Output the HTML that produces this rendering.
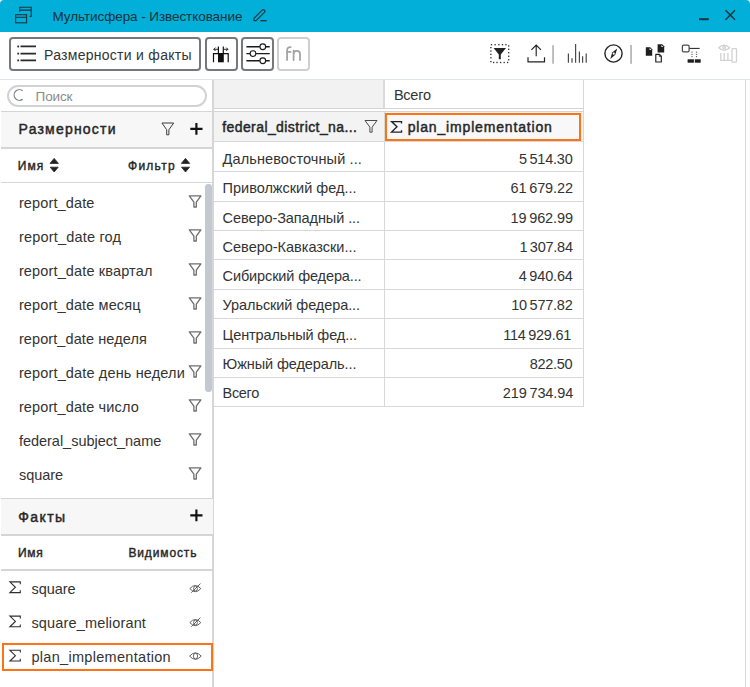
<!DOCTYPE html>
<html><head><meta charset="utf-8">
<style>
*{margin:0;padding:0;box-sizing:border-box}
html,body{width:750px;height:687px;overflow:hidden;background:#fff;font-family:"Liberation Sans",sans-serif;color:#333}
.a{position:absolute}
.t{position:absolute;white-space:nowrap;line-height:1}
#title{left:0;top:0;width:750px;height:31.6px;background:#01afd8;border-radius:4px 4px 0 0}
#toolbar{left:0;top:31.6px;width:750px;height:48.4px;background:#fff;border-bottom:1px solid #dfe5ec}
.btn{position:absolute;top:37.2px;height:33.6px;border:2px solid #76797b;border-radius:4px;background:#fff}
.ln{position:absolute;background:#d5d5d5;height:1px}
.hdr{position:absolute;background:#f7f7f7}
.item{font-size:14px;letter-spacing:0.35px;color:#333}
.fl{position:absolute}
.cell{font-size:13.5px;letter-spacing:0.3px;color:#333}
</style></head><body>
<!-- title bar -->
<div id="title" class="a"></div>
<svg class="a" style="left:0;top:0" width="750" height="31">
  <g fill="none" stroke="#17353f" stroke-width="1.6">
    <path d="M19.8 11.8V7.3H31.2V16.4H29.6M19.8 10.1H31.2" stroke-width="1.1"/>
    <rect x="15.6" y="14.7" width="11" height="8.1" stroke-width="1.1"/>
    <path d="M15.6 17.3h11" stroke-width="1.1"/>
    <path d="M253.9 20.6V18.4L262.2 10.1a1.55 1.55 0 0 1 2.2 2.2L256.1 20.6Z" stroke-width="1.15" stroke-linejoin="round"/>
    <path d="M260.3 20.7H266.7" stroke-width="1.3"/>
    <path d="M699 19.2h9.8" stroke-width="2"/>
    <path d="M725.5 10.2l9.5 9.5M735 10.2l-9.5 9.5" stroke-width="1.5"/>
  </g>
</svg>

<!-- toolbar -->
<div id="toolbar" class="a"></div>
<div class="btn" style="left:9px;width:192px"></div>
<div class="btn" style="left:205px;width:32.8px"></div>
<div class="btn" style="left:240.9px;width:32.8px"></div>
<div class="btn" style="left:277.4px;width:32.8px;border-color:#cfcfcf"></div>
<svg class="a" style="left:0;top:31px" width="750" height="48">
  <g stroke="#2a2a2a" stroke-width="1.7">
    <path d="M20.5 15.4H36M20.5 22.6H36M20.5 29.4H36"/>
  </g>
  <g fill="#2a2a2a"><rect x="17.3" y="14.6" width="1.8" height="1.8"/><rect x="17.3" y="21.7" width="1.8" height="1.8"/><rect x="17.3" y="28.5" width="1.8" height="1.8"/></g>
</svg>

<!-- left panel -->
<div class="a" style="left:6.9px;top:84.9px;width:200.6px;height:22.6px;border:2px solid #d2d2d2;border-radius:11.3px"></div>
<div class="ln" style="left:1px;top:111px;width:212px"></div>
<div class="hdr" style="left:1px;top:112px;width:212px;height:35px"></div>
<div class="ln" style="left:1px;top:147.2px;width:212px;height:1.5px"></div>
<div class="ln" style="left:1px;top:182px;width:212px"></div>
<div class="a" style="left:205.4px;top:184.1px;width:6.5px;height:208.4px;background:#c4c8cf;border-radius:3.25px"></div>
<div class="a" style="left:212.4px;top:80px;width:1.4px;height:607px;background:#d6d6d6"></div>
<div class="a" style="left:745px;top:80px;width:1px;height:607px;background:#d8d8d8"></div>


<div class="ln" style="left:1px;top:497.5px;width:212px"></div>
<div class="hdr" style="left:1px;top:498.5px;width:212px;height:35.5px"></div>
<div class="ln" style="left:1px;top:534px;width:212px;height:1.5px"></div>
<div class="ln" style="left:1px;top:569.3px;width:212px;height:1.4px"></div>

<div class="a" style="left:2px;top:643px;width:211px;height:28px;border:2px solid #ff7314"></div>

<!-- table -->
<div class="a" style="left:214px;top:80px;width:169px;height:28px;background:#f2f2f2"></div>
<div class="a" style="left:214px;top:108px;width:369px;height:1px;background:#d4d4d4"></div>
<div class="a" style="left:214px;top:111px;width:369px;height:1px;background:#d4d4d4"></div>
<div class="a" style="left:214px;top:112px;width:369px;height:29.5px;background:#f3f3f3"></div>
<div class="a" style="left:383px;top:80px;width:2px;height:28px;background:#dadada"></div>
<div class="a" style="left:582.5px;top:80px;width:1px;height:327px;background:#d8d8d8"></div>
<div class="a" style="left:384px;top:111px;width:1px;height:296px;background:#d8d8d8"></div>
<div class="a" style="left:385px;top:112.7px;width:195.6px;height:28px;border:2px solid #ff7314;background:#f8f8f8"></div>


<div class="a" style="left:214px;top:141.4px;width:369px;height:1px;background:#d8d8d8"></div>
<div class="a" style="left:214px;top:171.10px;width:369px;height:1px;background:#d8d8d8"></div>
<div class="a" style="left:214px;top:200.51px;width:369px;height:1px;background:#d8d8d8"></div>
<div class="a" style="left:214px;top:229.92px;width:369px;height:1px;background:#d8d8d8"></div>
<div class="a" style="left:214px;top:259.33px;width:369px;height:1px;background:#d8d8d8"></div>
<div class="a" style="left:214px;top:288.74px;width:369px;height:1px;background:#d8d8d8"></div>
<div class="a" style="left:214px;top:318.15px;width:369px;height:1px;background:#d8d8d8"></div>
<div class="a" style="left:214px;top:347.56px;width:369px;height:1px;background:#d8d8d8"></div>
<div class="a" style="left:214px;top:376.97px;width:369px;height:1px;background:#d8d8d8"></div>
<div class="a" style="left:214px;top:406.38px;width:369px;height:1px;background:#d8d8d8"></div>
<svg class="a" style="left:0;top:0;z-index:5" width="750" height="687">
 <!-- btn2 pivot icon -->
 <g fill="none" stroke="#111" stroke-width="1.2">
  <path d="M213.5 62.3V53.6H228.2V62.3"/>
  <path d="M218.4 53V46.5M223.3 53V46.5"/>
  <path d="M213.8 49.3H218M215.5 47.6l-1.7 1.7 1.7 1.7" stroke-width="0.9"/>
  <path d="M223.7 49.3H227.9M226.2 47.6l1.7 1.7-1.7 1.7" stroke-width="0.9"/>
 </g>
 <rect x="218" y="53.5" width="5.8" height="8.8" fill="#111"/>
 <!-- btn3 sliders -->
 <g fill="none" stroke="#1a1a1a" stroke-width="1.5">
  <path d="M246.4 46.7H259.8M265.8 46.7H269.7" stroke-width="1.35"/>
  <path d="M246.4 53.6H250M256 53.6H269.7" stroke-width="1.35"/>
  <path d="M246.4 60.7H259.8M265.8 60.7H269.7" stroke-width="1.35"/>
  <circle cx="262.8" cy="46.7" r="2.85" stroke-width="1.15"/>
  <circle cx="253" cy="53.6" r="2.85" stroke-width="1.15"/>
  <circle cx="262.8" cy="60.7" r="2.85" stroke-width="1.15"/>
 </g>
 <!-- fn -->
 <g fill="none" stroke="#a2a2a2" stroke-width="1.75" stroke-linecap="round">
  <path d="M287.1 60V50.2a3.2 3.2 0 0 1 3.2-3.2h0.4"/>
  <path d="M287.1 51.9H290.6"/>
  <path d="M293.6 50.7V60M293.6 54a3.2 3.2 0 0 1 6.4 0V60"/>
 </g>
 <!-- dotted filter -->
 <g fill="#2a2a2a"><rect x="490.85" y="44.05" width="1.3" height="1.3"/><rect x="494.45" y="44.05" width="1.3" height="1.3"/><rect x="498.25" y="44.05" width="1.3" height="1.3"/><rect x="501.85" y="44.05" width="1.3" height="1.3"/><rect x="505.25" y="44.05" width="1.3" height="1.3"/><rect x="508.05" y="45.25" width="1.3" height="1.3"/><rect x="508.05" y="48.65" width="1.3" height="1.3"/><rect x="508.05" y="52.05" width="1.3" height="1.3"/><rect x="508.05" y="55.65" width="1.3" height="1.3"/><rect x="508.05" y="59.05" width="1.3" height="1.3"/><rect x="492.95" y="61.85" width="1.3" height="1.3"/><rect x="496.35" y="61.85" width="1.3" height="1.3"/><rect x="499.95" y="61.85" width="1.3" height="1.3"/><rect x="503.55" y="61.85" width="1.3" height="1.3"/><rect x="506.95" y="61.85" width="1.3" height="1.3"/><rect x="490.25" y="46.95" width="1.3" height="1.3"/><rect x="490.25" y="50.35" width="1.3" height="1.3"/><rect x="490.25" y="53.75" width="1.3" height="1.3"/><rect x="490.25" y="57.15" width="1.3" height="1.3"/><rect x="490.25" y="60.95" width="1.3" height="1.3"/></g>
 <path d="M493.6 48H506L500.8 54.4V59.3H498.8V54.4Z" fill="#222"/>
 <!-- upload -->
 <g fill="none" stroke="#222" stroke-width="1.3">
  <path d="M536.2 45.8V56.3M531.4 49.8l4.8-4.8 4.8 4.8" stroke-width="1.15"/>
  <path d="M528 57.2V61.9H544.5V57.2" stroke-width="1.2"/>
 </g>
 <rect x="552.3" y="45.2" width="1.5" height="18.5" fill="#aaa"/>
 <!-- bars -->
 <g stroke="#4a4a4a" stroke-width="1.2">
  <path d="M568.4 62.8V53.6M572 62.8V58.2M575.6 62.8V44M579.4 62.8V51.6M582.6 62.8V56.2M586.2 62.8V53.6"/>
 </g>
 <!-- compass -->
 <circle cx="613.5" cy="53.5" r="8.6" fill="none" stroke="#222" stroke-width="1.4"/>
 <path d="M617.2 48.4L615.3 54.7L610.3 58.9L612.2 52.6Z" fill="#222"/>
 <circle cx="613.75" cy="53.65" r="1.1" fill="#fff"/>
 <rect x="630.3" y="45" width="1.5" height="18.8" fill="#aaa"/>
 <!-- docs -->
 <path d="M645.8 47.2H650.2L652.2 49.2V55.8H645.8Z" fill="#1e1e1e"/>
 <path d="M649.6 47.9V49.9H651.6Z" fill="#fff"/>
 <path d="M657.6 44.2H662.2L664.2 46.2V52.4H657.6Z" fill="#1e1e1e"/>
 <path d="M661.4 44.9V46.9H663.4Z" fill="#fff"/>
 <path d="M655.8 54.4H659.5L661.3 56.2V62H655.8Z" fill="none" stroke="#1e1e1e" stroke-width="1.15" stroke-linejoin="round"/><path d="M659.3 54.6V56.4H661.1" fill="none" stroke="#1e1e1e" stroke-width="0.8"/>
 <!-- hierarchy -->
 <rect x="682.4" y="45" width="6.7" height="6.9" rx="1.3" fill="none" stroke="#4a4a4a" stroke-width="1.25"/>
 <path d="M689.4 48.4H699.6" stroke="#222" stroke-width="1.05"/>
 <g fill="#666"><rect x="691.4" y="51.6" width="1.2" height="1.1"/><rect x="691.4" y="53.9" width="1.2" height="1.1"/><rect x="691.4" y="56" width="1.2" height="1.1"/>
 <rect x="695.9" y="51.6" width="1.2" height="1.1"/><rect x="695.9" y="53.9" width="1.2" height="1.1"/><rect x="695.9" y="56" width="1.2" height="1.1"/></g>
 <rect x="687.6" y="59.3" width="6.3" height="3.4" fill="#1e1e1e"/>
 <rect x="694.8" y="59.3" width="5.9" height="3.4" fill="#1e1e1e"/>
 <!-- disabled eye-cols -->
 <g fill="none" stroke="#d2d2d2" stroke-width="1.3">
  <path d="M718.8 47.8Q724.2 42.6 729.6 47.8Q724.2 53 718.8 47.8Z"/>
  <circle cx="724.2" cy="47.8" r="1.3"/>
  <path d="M720.8 52.9V60.4H731.8M724.2 52.9V60.4M727.9 52.9V60.4"/>
  <rect x="732" y="48.6" width="4.5" height="13.6" rx="0.8"/>
 </g>
 <!-- search C -->
 <path d="M22.6 90.76A5.3 5.3 0 1 0 22.6 99.24" fill="none" stroke="#6f7780" stroke-width="1.1"/>
 <!-- dims header filter + plus -->
 <path d="M161.9 123H173.7L168.9 129.7V134.8H166.7V129.7Z" fill="none" stroke="#3a3a3a" stroke-width="1" stroke-linejoin="round"/>
 <path d="M190.3 128.8H202.5M196.4 122.9V134.7" stroke="#111" stroke-width="2.15"/>
 <path d="M190.3 515.3H202.5M196.4 509.4V521.2" stroke="#111" stroke-width="2.15"/>
 <!-- sort arrows -->
 <g fill="#222" stroke="#222" stroke-width="0.8" stroke-linejoin="round">
  <path d="M54.2 158.4L58.4 163.4H50Z"/><path d="M50.2 167.2H58.2L54.2 172Z"/>
  <path d="M185.5 158.4L189.7 163.4H181.3Z"/><path d="M181.5 167.2H189.5L185.5 172Z"/>
 </g>
 <!-- table header filter -->
 <path d="M365 120.5H377L372.1 127.2V132.2H369.9V127.2Z" fill="none" stroke="#4a4a4a" stroke-width="1" stroke-linejoin="round"/>
 <!-- sigma header -->
 <path d="M401.5 123.4V121.6H391.6L397 126.85L391.6 132.1H401.5V130.3" fill="none" stroke="#222" stroke-width="1.35"/>
 <path d="M189.3 195.8H200.9L196.3 202.2V207.0H193.9V202.2Z" fill="none" stroke="#6e6e6e" stroke-width="1.3" stroke-linejoin="round"/>
 <path d="M189.3 229.8H200.9L196.3 236.2V241.0H193.9V236.2Z" fill="none" stroke="#6e6e6e" stroke-width="1.3" stroke-linejoin="round"/>
 <path d="M189.3 263.8H200.9L196.3 270.2V275.0H193.9V270.2Z" fill="none" stroke="#6e6e6e" stroke-width="1.3" stroke-linejoin="round"/>
 <path d="M189.3 297.8H200.9L196.3 304.2V309.0H193.9V304.2Z" fill="none" stroke="#6e6e6e" stroke-width="1.3" stroke-linejoin="round"/>
 <path d="M189.3 331.8H200.9L196.3 338.2V343.0H193.9V338.2Z" fill="none" stroke="#6e6e6e" stroke-width="1.3" stroke-linejoin="round"/>
 <path d="M189.3 365.8H200.9L196.3 372.2V377.0H193.9V372.2Z" fill="none" stroke="#6e6e6e" stroke-width="1.3" stroke-linejoin="round"/>
 <path d="M189.3 399.8H200.9L196.3 406.2V411.0H193.9V406.2Z" fill="none" stroke="#6e6e6e" stroke-width="1.3" stroke-linejoin="round"/>
 <path d="M189.3 433.8H200.9L196.3 440.2V445.0H193.9V440.2Z" fill="none" stroke="#6e6e6e" stroke-width="1.3" stroke-linejoin="round"/>
 <path d="M189.3 467.8H200.9L196.3 474.2V479.0H193.9V474.2Z" fill="none" stroke="#6e6e6e" stroke-width="1.3" stroke-linejoin="round"/>
 <path d="M20.3 584.2V581.9H9.9L15.4 587.25L9.9 592.6H20.3V590.3" fill="none" stroke="#2e2e2e" stroke-width="1.1"/>
 <path d="M20.3 618.4V616.1H9.9L15.4 621.45L9.9 626.8H20.3V624.5" fill="none" stroke="#2e2e2e" stroke-width="1.1"/>
 <path d="M20.3 652.6V650.3H9.9L15.4 655.65L9.9 661.0H20.3V658.7" fill="none" stroke="#2e2e2e" stroke-width="1.1"/>
 <path d="M189.8 588.6Q195.3 582.4 200.8 588.6Q195.3 594.8 189.8 588.6Z" fill="none" stroke="#5a5a5a" stroke-width="0.95"/><ellipse cx="195.5" cy="588.6" rx="1.9" ry="2.4" fill="none" stroke="#5a5a5a" stroke-width="0.9"/><path d="M191.3 592.7L200.4 583.6" stroke="#5a5a5a" stroke-width="0.95"/>
 <path d="M189.8 622.6Q195.3 616.4 200.8 622.6Q195.3 628.8 189.8 622.6Z" fill="none" stroke="#5a5a5a" stroke-width="0.95"/><ellipse cx="195.5" cy="622.6" rx="1.9" ry="2.4" fill="none" stroke="#5a5a5a" stroke-width="0.9"/><path d="M191.3 626.7L200.4 617.6" stroke="#5a5a5a" stroke-width="0.95"/>
 <path d="M189.6 656.1Q195.4 649.6 201.2 656.1Q195.4 662.6 189.6 656.1Z" fill="none" stroke="#5a5a5a" stroke-width="0.95"/><ellipse cx="195.5" cy="656.1" rx="2.1" ry="2.8" fill="none" stroke="#5a5a5a" stroke-width="0.9"/>
</svg>
<div class="t" style="left:52.50px;top:10px;font-size:13.5px;letter-spacing:-0.072px;color:#15323c;">Мультисфера - Известкование</div>
<div class="t" style="left:44.00px;top:48px;font-size:14px;letter-spacing:0.276px;color:#333;">Размерности и факты</div>
<div class="t" style="left:35.60px;top:90px;font-size:13.5px;letter-spacing:-0.122px;color:#8a8a8a;">Поиск</div>
<div class="t" style="left:18.60px;top:122px;font-size:14px;-webkit-text-stroke:0.45px #262626;letter-spacing:1.203px;color:#262626;">Размерности</div>
<div class="t" style="left:17.80px;top:160px;font-size:12px;-webkit-text-stroke:0.4px #262626;letter-spacing:1.012px;color:#262626;">Имя</div>
<div class="t" style="left:128.00px;top:160px;font-size:12px;-webkit-text-stroke:0.4px #262626;letter-spacing:1.258px;color:#262626;">Фильтр</div>
<div class="t" style="left:18.90px;top:196px;font-size:14.5px;letter-spacing:0.133px;color:#333;">report_date</div>
<div class="t" style="left:18.90px;top:230px;font-size:14.5px;letter-spacing:0.195px;color:#333;">report_date год</div>
<div class="t" style="left:18.90px;top:264px;font-size:14.5px;letter-spacing:0.145px;color:#333;">report_date квартал</div>
<div class="t" style="left:18.90px;top:298px;font-size:14.5px;letter-spacing:0.123px;color:#333;">report_date месяц</div>
<div class="t" style="left:18.90px;top:332px;font-size:14.5px;letter-spacing:0.094px;color:#333;">report_date неделя</div>
<div class="t" style="left:18.90px;top:366px;font-size:14.5px;letter-spacing:0.147px;color:#333;">report_date день недели</div>
<div class="t" style="left:18.90px;top:400px;font-size:14.5px;letter-spacing:0.126px;color:#333;">report_date число</div>
<div class="t" style="left:18.90px;top:434px;font-size:14.5px;letter-spacing:-0.015px;color:#333;">federal_subject_name</div>
<div class="t" style="left:18.90px;top:468px;font-size:14.5px;letter-spacing:-0.008px;color:#333;">square</div>
<div class="t" style="left:18.20px;top:510px;font-size:14px;-webkit-text-stroke:0.45px #262626;letter-spacing:1.428px;color:#262626;">Факты</div>
<div class="t" style="left:18.00px;top:547px;font-size:12px;-webkit-text-stroke:0.4px #262626;letter-spacing:0.712px;color:#262626;">Имя</div>
<div class="t" style="left:128.40px;top:547px;font-size:12px;-webkit-text-stroke:0.4px #262626;letter-spacing:0.877px;color:#262626;">Видимость</div>
<div class="t" style="left:31.40px;top:582px;font-size:14.5px;letter-spacing:-0.008px;color:#333;">square</div>
<div class="t" style="left:31.40px;top:616px;font-size:14.5px;letter-spacing:0.164px;color:#333;">square_meliorant</div>
<div class="t" style="left:31.40px;top:650px;font-size:14.5px;letter-spacing:0.305px;color:#333;">plan_implementation</div>
<div class="t" style="left:393.90px;top:88px;font-size:14.5px;letter-spacing:-0.230px;color:#333;">Всего</div>
<div class="t" style="left:222.20px;top:120px;font-size:14px;-webkit-text-stroke:0.45px #262626;letter-spacing:0.416px;color:#262626;">federal_district_na...</div>
<div class="t" style="left:407.70px;top:120px;font-size:14px;-webkit-text-stroke:0.45px #262626;letter-spacing:0.834px;color:#262626;">plan_implementation</div>
<div class="t" style="left:222.60px;top:152px;font-size:14.5px;letter-spacing:0.109px;color:#333;">Дальневосточный ...</div>
<div class="t" style="left:518.90px;top:152px;font-size:14.5px;letter-spacing:-0.203px;color:#333;">5 514.30</div>
<div class="t" style="left:222.60px;top:181px;font-size:14.5px;letter-spacing:-0.011px;color:#333;">Приволжский фед...</div>
<div class="t" style="left:510.50px;top:181px;font-size:14.5px;letter-spacing:-0.110px;color:#333;">61 679.22</div>
<div class="t" style="left:222.60px;top:211px;font-size:14.5px;letter-spacing:-0.080px;color:#333;">Северо-Западный ...</div>
<div class="t" style="left:510.50px;top:211px;font-size:14.5px;letter-spacing:-0.110px;color:#333;">19 962.99</div>
<div class="t" style="left:222.60px;top:240px;font-size:14.5px;letter-spacing:-0.013px;color:#333;">Северо-Кавказски...</div>
<div class="t" style="left:519.40px;top:240px;font-size:14.5px;letter-spacing:-0.245px;color:#333;">1 307.84</div>
<div class="t" style="left:222.60px;top:269px;font-size:14.5px;letter-spacing:-0.126px;color:#333;">Сибирский федера...</div>
<div class="t" style="left:518.70px;top:269px;font-size:14.5px;letter-spacing:-0.160px;color:#333;">4 940.64</div>
<div class="t" style="left:222.60px;top:298px;font-size:14.5px;letter-spacing:-0.080px;color:#333;">Уральский федера...</div>
<div class="t" style="left:511.30px;top:298px;font-size:14.5px;letter-spacing:-0.247px;color:#333;">10 577.82</div>
<div class="t" style="left:222.60px;top:328px;font-size:14.5px;letter-spacing:-0.115px;color:#333;">Центральный фед...</div>
<div class="t" style="left:503.30px;top:328px;font-size:14.5px;letter-spacing:-0.263px;color:#333;">114 929.61</div>
<div class="t" style="left:222.60px;top:357px;font-size:14.5px;letter-spacing:-0.090px;color:#333;">Южный федераль...</div>
<div class="t" style="left:529.70px;top:357px;font-size:14.5px;letter-spacing:-0.271px;color:#333;">822.50</div>
<div class="t" style="left:222.60px;top:386px;font-size:14.5px;letter-spacing:-0.355px;color:#333;">Всего</div>
<div class="t" style="left:502.70px;top:386px;font-size:14.5px;letter-spacing:-0.094px;color:#333;">219 734.94</div>
</body></html>
